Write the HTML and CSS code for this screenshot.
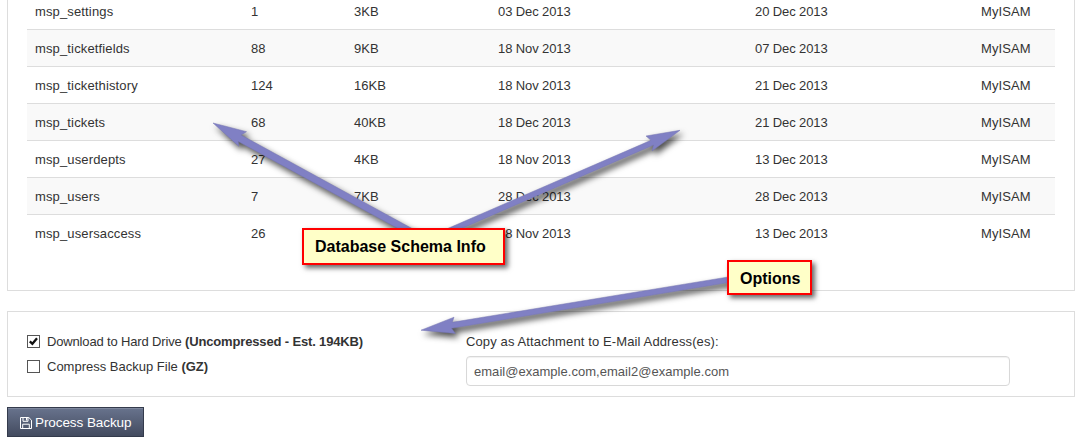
FILE: index.html
```
<!DOCTYPE html>
<html lang="en">
<head>
<meta charset="utf-8">
<title>Database Backup</title>
<link rel="stylesheet" href="styles.css">
</head>
<body>
<main class="page">
  <section class="panel schema">
    <table class="tables">
      <colgroup><col class="c-name"><col class="c-rows"><col class="c-size"><col class="c-date"><col class="c-updated"><col class="c-engine"></colgroup>
      <tbody>
        <tr><td>msp_settings</td><td>1</td><td>3KB</td><td>03 Dec 2013</td><td>20 Dec 2013</td><td>MyISAM</td></tr>
        <tr><td>msp_ticketfields</td><td>88</td><td>9KB</td><td>18 Nov 2013</td><td>07 Dec 2013</td><td>MyISAM</td></tr>
        <tr><td>msp_tickethistory</td><td>124</td><td>16KB</td><td>18 Nov 2013</td><td>21 Dec 2013</td><td>MyISAM</td></tr>
        <tr><td>msp_tickets</td><td>68</td><td>40KB</td><td>18 Dec 2013</td><td>21 Dec 2013</td><td>MyISAM</td></tr>
        <tr><td>msp_userdepts</td><td>27</td><td>4KB</td><td>18 Nov 2013</td><td>13 Dec 2013</td><td>MyISAM</td></tr>
        <tr><td>msp_users</td><td>7</td><td>7KB</td><td>28 Dec 2013</td><td>28 Dec 2013</td><td>MyISAM</td></tr>
        <tr><td>msp_usersaccess</td><td>26</td><td></td><td>18 Nov 2013</td><td>13 Dec 2013</td><td>MyISAM</td></tr>
      </tbody>
    </table>
  </section>

  <section class="panel options">
    <div class="choices">
      <label class="choice"><span class="box"><svg width="11" height="11" viewBox="0 0 11 11"><path d="M1.8 5.3 L4.4 7.8 L9 2.2" fill="none" stroke="#111" stroke-width="2.3"/></svg></span><span class="choice-text">Download to Hard Drive <b>(Uncompressed - Est. 194KB)</b></span></label>
      <label class="choice"><span class="box"></span><span class="choice-text choice-short">Compress Backup File <b>(GZ)</b></span></label>
    </div>
    <div class="mail">
      <div class="mail-label">Copy as Attachment to E-Mail Address(es):</div>
      <div class="field"><span class="field-text">email@example.com,email2@example.com</span></div>
    </div>
  </section>

  <button class="process" type="button">
    <svg class="disk" width="12" height="12" viewBox="0 0 12 12" fill="none" stroke="#fff" stroke-width="1"><path d="M.5 .5H8.8L11.5 3.2V11.5H.5Z"/><path d="M3 .5V4.3H8V.5"/><path d="M6 1H7.2V3.5H6Z" fill="#fff" stroke="none"/><path d="M2.7 11.5V7.2H9.3V11.5"/></svg>
    <span class="process-text">Process Backup</span>
  </button>

  <svg class="arrows" width="1084" height="448" viewBox="0 0 1084 448">
    <path d="M213 123 L246.500 131.700 L241 135 L422 234 H408 L238.300 141.500 L238.800 146.300 Z"/>
    <path d="M680 130.300 L652 151 L653.500 145 L449 234 H435 L651 140.300 L646 136 Z"/>
    <path d="M421 330.200 L454 317.200 L452.300 322.300 L730 276.700 V282.300 L451.500 328.300 L455.400 333.400 Z"/>
  </svg>
  <div class="callout callout-schema"><span>Database Schema Info</span></div>
  <div class="callout callout-options"><span>Options</span></div>
</main>
</body>
</html>
```
FILE: styles.css
```
* { box-sizing: border-box; }
body {
  margin: 0;
  background: #fff;
  color: #333;
  font: 13px/20px "Liberation Sans", Arial, sans-serif;
}
.page {
  position: relative;
  width: 1084px;
  height: 448px;
  padding: 0 9px 0 7px;
  overflow: hidden;
}
.panel { border: 1px solid #ddd; }
.schema {
  height: 291px;
  border-top: 0;
  padding: 0 19px;
  overflow: hidden;
}
.tables {
  width: 1028px;
  margin-top: -8px;
  border-collapse: separate;
  border-spacing: 0;
  table-layout: fixed;
}
.tables td {
  height: 37px;
  padding: 2px 8px 0;
  border-top: 1px solid #ddd;
  white-space: nowrap;
}
.tables td:first-child { letter-spacing: .14px; }
.tables td:nth-child(4),
.tables td:nth-child(5) { letter-spacing: -.1px; }
.tables td:last-child { letter-spacing: .1px; }
.tables tr:nth-child(even) td { background: #f9f9f9; }
.c-name { width: 216px; }
.c-rows { width: 103px; }
.c-size { width: 144px; }
.c-date { width: 257px; }
.c-updated { width: 226px; }
.c-engine { width: 82px; }

.options {
  display: flex;
  height: 86px;
  margin-top: 20px;
  padding: 20px 19px 0;
}
.choices { width: 439px; }
.choice {
  display: flex;
  align-items: center;
  height: 20px;
  margin-bottom: 5px;
  gap: 7px;
}
.choice-text { letter-spacing: -.155px; }
.choice-short { letter-spacing: 0; }
.box {
  width: 13px;
  height: 13px;
  border: 1px solid #555;
  background: #fff;
}
.choice .box { margin-top: -1px; }
.box svg { display: block; }
.mail-label { height: 24px; letter-spacing: .12px; }
.field {
  width: 544px;
  height: 30px;
  padding: 5px 7px 3px;
  border: 1px solid #d8d8d8;
  border-radius: 4px;
  color: #555;
  box-shadow: inset 0 1px 1px rgba(0, 0, 0, .06);
  letter-spacing: .03px;
}

.process {
  display: flex;
  align-items: center;
  width: 137px;
  height: 30px;
  margin-top: 10px;
  padding: 1px 12px 0;
  gap: 3px;
  border: 1px solid #343b4c;
  background: linear-gradient(#68738d, #434b5f);
  box-shadow: inset 0 1px 0 rgba(255, 255, 255, .15);
  color: #fff;
  font: 13.5px/20px "Liberation Sans", Arial, sans-serif;
  letter-spacing: -.08px;
  white-space: nowrap;
}
.disk { flex: none; }
.process-text { padding-top: 1px; }

/* Annotations drawn over the page */
.arrows {
  position: absolute;
  left: 0;
  top: 0;
  fill: #8080c4;
  stroke: #7475b3;
  stroke-width: .5;
  filter: drop-shadow(3px 4px 3px rgba(0, 0, 0, .7));
}
.callout {
  position: absolute;
  border: 2px solid #f00;
  background: #ffffc8;
  box-shadow: 3px 3px 5px rgba(0, 0, 0, .6);
  color: #000;
  font-size: 16px;
  font-weight: bold;
  white-space: nowrap;
}
.callout-schema {
  left: 302px;
  top: 228px;
  width: 203px;
  height: 37px;
  padding: 7px 11px;
}
.callout-options {
  left: 727px;
  top: 260px;
  width: 85px;
  height: 35px;
  padding: 7px 11px;
}
```
